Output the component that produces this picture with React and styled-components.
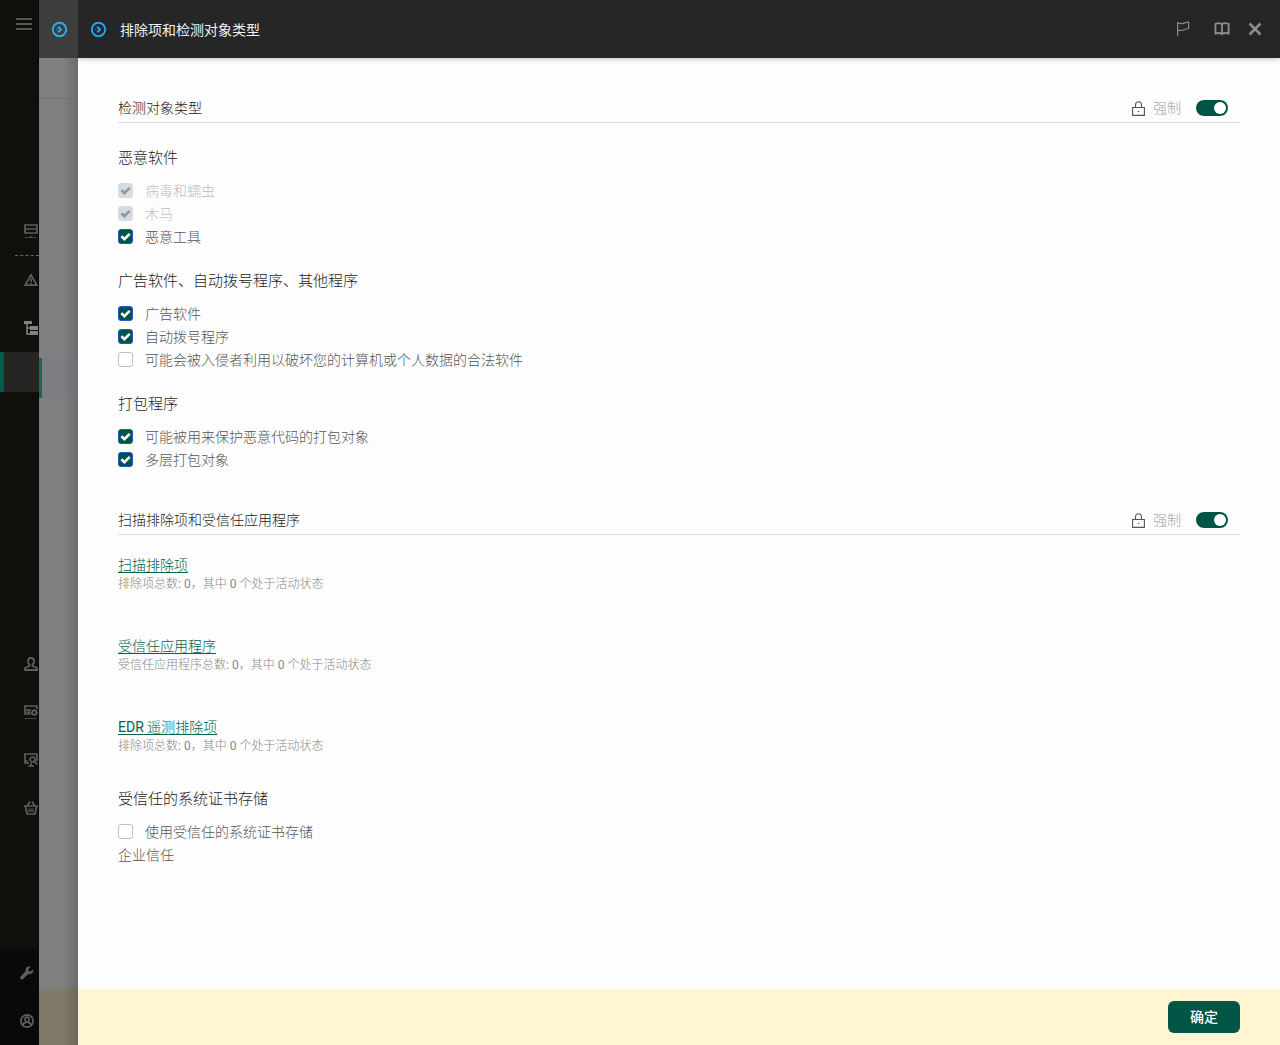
import React, { useState } from "react";
import styled, { createGlobalStyle } from "styled-components";

const GlobalStyle = createGlobalStyle`
  *, *::before, *::after { box-sizing: border-box; }
  body {
    margin: 0;
    background: #fdfdfd;
    color: #333;
    font-family: Roboto, "Noto Sans CJK SC", sans-serif;
    font-size: 14px;
    line-height: 20px;
    font-weight: 300;
  }
`;

const Shell = styled.div`
  display: grid;
  grid-template-columns: 39px 39px minmax(0, 1fr);
  min-height: 100vh;
`;

const Sidebar = styled.aside`
  display: flex;
  flex-direction: column;
  background: #0f0f0c;
  box-shadow: inset -1px 0 #060605;
`;

const iconButton = `
  display: flex;
  align-items: center;
  border: 0;
  background: none;
  color: inherit;
  cursor: pointer;
  font: inherit;
`;

const MenuButton = styled.button`
  ${iconButton}
  height: 48px;
  padding: 0 0 0 16px;
  color: #555553;
`;

const NavGroup = styled.nav`
  display: flex;
  flex-direction: column;
  margin-top: ${(p) => p.$top};
  background: ${(p) => p.$bg || "none"};
`;

const NavItem = styled.button`
  ${iconButton}
  height: 48px;
  padding: 0 0 0 ${(p) => (p.$inset ? "20px" : "24px")};
  color: ${(p) => (p.$bright ? "#838381" : "#5e5e5c")};
`;

const NavDivider = styled.hr`
  width: 24px;
  margin: 0 0 0 auto;
  border: 0;
  border-top: 1px dashed #6a6a68;
`;

const NavCurrent = styled.div`
  height: 40px;
  background: #252524;
  border-left: 4px solid #005c4b;
`;

const Underlay = styled.div`
  display: flex;
  flex-direction: column;
  background: linear-gradient(to right, transparent 24px, rgba(0, 0, 0, 0.16)), #808080;
`;

const UnderlayHeader = styled.div`
  display: flex;
  align-items: center;
  justify-content: center;
  height: 58px;
  padding-left: 2px;
  background: #3d3d3d;
  color: #2cabf2;
`;

const UnderlayTabs = styled.div`
  height: 41px;
  border-bottom: 1px solid #727272;
`;

const UnderlayCurrent = styled.div`
  height: 40px;
  margin-top: 259px;
  background: rgba(110, 118, 130, 0.25);
  border-left: 3px solid #1b6553;
`;

const UnderlayFooter = styled.div`
  height: 56px;
  margin-top: auto;
  background: linear-gradient(to right, transparent 24px, rgba(0, 0, 0, 0.16)), #807a68;
`;

const Drawer = styled.main`
  display: flex;
  flex-direction: column;
  background: #fdfdfd;
`;

const DrawerHeader = styled.header`
  display: flex;
  align-items: center;
  height: 58px;
  padding: 0 18px 0 12px;
  background: #262626;
  color: #8c8c8c;
  box-shadow: 0 1px 5px rgba(0, 0, 0, 0.25);
  clip-path: inset(0 0 -8px 0);
`;

const BackMark = styled.span`
  display: flex;
  width: 30px;
  color: #1ea5f3;
`;

const DrawerTitle = styled.h1`
  flex: 1;
  margin: 0;
  padding-top: 2px;
  color: #f2f2f2;
  font-size: 14px;
  font-weight: 400;
`;

const HeaderActions = styled.div`
  display: flex;
  align-items: center;
  gap: 18px;
`;

const HeaderButton = styled.button`
  ${iconButton}
  padding: 0 ${(p) => (p.$wide ? "6px" : "0")} 0 0;
`;

const Content = styled.div`
  flex: 1;
  padding: 40px;
`;

const Section = styled.section`
  & + & {
    margin-top: 39px;
  }
`;

const SectionHead = styled.div`
  display: flex;
  align-items: center;
  height: 25px;
  padding: 0 12px 4px 0;
  border-bottom: 1px solid #dedede;
`;

const SectionTitle = styled.h2`
  flex: 1;
  margin: 0;
  font-size: 14px;
  font-weight: 300;
  color: #222;
`;

const Enforce = styled.label`
  display: flex;
  align-items: center;
  gap: 8px;
  color: #a6a6a6;
`;

const Switch = styled.input`
  appearance: none;
  width: 32px;
  height: 16px;
  margin: 0 0 0 7px;
  padding: 2px;
  border-radius: 8px;
  background: ${(p) => (p.checked ? "#005546" : "#a6a6a6")};
  cursor: pointer;

  &::before {
    content: "";
    display: block;
    width: 12px;
    height: 12px;
    margin-left: ${(p) => (p.checked ? "16px" : "0")};
    border-radius: 50%;
    background: #fff;
  }
`;

const Group = styled.fieldset`
  min-width: 0;
  margin: ${(p) => p.$top} 0 0;
  padding: 0;
  border: 0;
`;

const GroupTitle = styled.legend`
  margin: 0 0 11px;
  padding: 0;
  color: #222;
  font-size: 15px;
`;

const OptionRow = styled.label`
  display: flex;
  align-items: center;
  gap: 12px;
  width: fit-content;
  height: 23px;
  color: ${(p) => (p.$disabled ? "#b9bfc5" : "#555")};
`;

const TickBox = styled.span`
  display: grid;
  width: 15px;
  height: 15px;

  & > * {
    grid-area: 1 / 1;
  }
  & > svg {
    pointer-events: none;
    color: ${(p) => (p.$disabled ? "#8c98a3" : "#fff")};
  }
`;

const TickInput = styled.input`
  appearance: none;
  width: 15px;
  height: 15px;
  margin: 0;
  border: 1px solid #b9c0c7;
  border-radius: 3px;
  background: #fff;

  &:checked {
    border-color: #2458c8;
    background: #005546;
  }
  &:disabled {
    border-color: #d5dbe0;
    background: #d5dbe0;
  }
`;

const LinkList = styled.div`
  display: flex;
  flex-direction: column;
  gap: 43px;
  margin-top: 20px;
`;

const LinkTitle = styled.a`
  display: block;
  width: fit-content;
  color: #006350;
  text-underline-offset: 2px;
`;

const LinkNote = styled.p`
  margin: 0;
  color: #888;
  font-size: 12px;
  line-height: 18px;
`;

const Latin = styled.span`
  font-weight: 400;
`;

const TrustNote = styled.p`
  margin: 2px 0 0;
  color: #555;
`;

const DrawerFooter = styled.footer`
  display: flex;
  align-items: center;
  justify-content: flex-end;
  height: 56px;
  padding: 0 40px;
  background: #fff5d0;
`;

const PrimaryButton = styled.button`
  width: 72px;
  height: 32px;
  padding: 0;
  border: 0;
  border-radius: 6px;
  background: #005546;
  color: #fff;
  font: inherit;
  font-weight: 500;
  cursor: pointer;
`;

const Icon = ({ w = 14, h = w, sw = 1.5, box, children }) => (
  <svg width={w} height={h} viewBox={box || `0 0 ${w} ${h}`} fill="none" stroke="currentColor" strokeWidth={sw} aria-hidden="true">
    {children}
  </svg>
);

const ArrowCircle = () => (
  <Icon w={17} sw={2}>
    <circle cx="8.5" cy="8.5" r="6.7" />
    <path d="M7.2 5.8 10 8.5 7.2 11.2" />
    <path d="M5.8 7.2v2.6" strokeWidth="1" opacity=".5" />
  </Icon>
);

const ServerIcon = () => (
  <Icon>
    <path d="M1 1h12v8H1zM1 5h12" strokeWidth="1.700" />
    <path d="M1 13.500h12" strokeWidth="1" strokeDasharray="2 1" />
    <path d="M6 13h2" />
  </Icon>
);

const WarningIcon = () => (
  <Icon sw={1.700}>
    <path d="M7 2 1.200 12.200h11.600zM7 5.500v3.300M7 9.800v1.200" />
  </Icon>
);

const TreeIcon = () => (
  <Icon>
    <path d="M0 0h8v3H0zM6 5h8v4H6zM6 10h8v4H6z" fill="currentColor" stroke="none" />
    <path d="M3 3v10h3M3 7h3" />
  </Icon>
);

const UserIcon = () => (
  <Icon sw={1.800}>
    <path d="M7 1C5 1 4 2.300 4 4.100c0 1.600.6 2.900 1.500 3.600V9L1 11v2h12v-2L8.500 9V7.700C9.400 7 10 5.700 10 4.100 10 2.300 9 1 7 1z" />
  </Icon>
);

const ServerGearIcon = () => (
  <Icon sw={1.700}>
    <path d="M13 4V1H1v8h6M1 5h6M3 7.200h3" />
    <circle cx="10.300" cy="7.500" r="2.200" />
    <path d="M10.300 4v1.500M10.300 9.500V11M6.900 7.500h1.300M12.400 7.500H14M7.900 5.100l1 1M11.700 8.900l1 1M12.700 5.100l-1 1M8.900 8.900l-1 1" strokeWidth="1" />
    <path d="M1 13.500h12" strokeWidth="1" strokeDasharray="2 1" />
  </Icon>
);

const MonitorIcon = () => (
  <Icon sw={1.700}>
    <path d="M5 10H1V1h12v7M1 8h3M7 10v3M4 13h6" />
    <circle cx="8.500" cy="6.500" r="2.500" />
    <path d="m10.300 8.300 3.200 3.200" />
  </Icon>
);

const BasketIcon = () => (
  <Icon sw={1.700}>
    <path d="M0 5h14M1.500 5.500 3 13h8l1.500-7.500M3.500 4.500 6 .5M10.500 4.500 8 .5" />
    <path d="M5 7.500V11M7 7.500V11M9 7.500V11" strokeWidth="1.200" />
  </Icon>
);

const WrenchIcon = () => (
  <Icon>
    <path d="M13.100 3.200 10.800 5.500 8.700 5.200 8.400 3.200 10.700.8C8.900.1 7 .6 6.100 2c-.7 1-.7 2.100-.4 3.100L.7 10.400c-.8.8-.8 1.800-.1 2.500s1.800.7 2.500 0l5.200-5c1.300.5 3 .2 4-.8 1-1 1.300-2.500.8-3.900z" fill="currentColor" stroke="none" />
  </Icon>
);

const AccountIcon = () => (
  <Icon sw={1.700}>
    <circle cx="7" cy="7" r="6.100" />
    <path d="M7 3.200c-1.300 0-2 .9-2 2.100 0 1 .4 1.800 1 2.300v.8l-2.700 1.200v1.700M7 3.200c1.300 0 2 .9 2 2.100 0 1-.4 1.800-1 2.300v.8l2.700 1.200v1.700" />
  </Icon>
);

const FlagIcon = () => (
  <Icon w={14} h={16} sw={1.2}>
    <path d="M1.600 1v14M1.600 2.300c2-.9 3.600.9 6 .1 2-.7 3.200-1.400 5-1.400v6.500c-2 0-3.200.8-5 1.500-2.400.9-4-.3-6 .8" />
  </Icon>
);

const BookIcon = () => (
  <Icon w={16} h={14} sw={1.8}>
    <path d="M8 2.200C6.500 1 3.500 1 1.400 1.900v9.700c2.100-.7 5.100-.7 6.600.5 1.500-1.200 4.500-1.200 6.600-.5V1.900C12.500 1 9.500 1 8 2.200zv10" />
  </Icon>
);

const CloseIcon = () => (
  <Icon w={14} sw={2.6}>
    <path d="m1.500 1.500 11 11M12.500 1.500l-11 11" />
  </Icon>
);

const LockIcon = () => (
  <Icon w={13} h={15} sw={1.1}>
    <path d="M.6 6.500h11.800v7.900H.6zM3.500 6.500V4c0-2 1.200-3.300 3-3.300s3 1.300 3 3.300v2.500" stroke="#555" />
    <path d="M5.800 10.500h1.400" stroke="#555" />
  </Icon>
);

function Option({ label, checked, disabled }) {
  const [on, setOn] = useState(!!checked);
  return (
    <OptionRow $disabled={disabled}>
      <TickBox $disabled={disabled}>
        <TickInput type="checkbox" checked={on} disabled={disabled} onChange={() => setOn(!on)} />
        {on && (
          <Icon w={15} sw={2.6}>
            <path d="m3.400 7.300 3 2.900 5.300-5.300" />
          </Icon>
        )}
      </TickBox>
      {label}
    </OptionRow>
  );
}

function OptionGroup({ title, options, top = "23px" }) {
  return (
    <Group $top={top}>
      <GroupTitle>{title}</GroupTitle>
      {options.map((o) => (
        <Option key={o.label} {...o} />
      ))}
    </Group>
  );
}

function Heading({ children }) {
  const [on, setOn] = useState(true);
  return (
    <SectionHead>
      <SectionTitle>{children}</SectionTitle>
      <Enforce>
        <LockIcon />
        强制
        <Switch type="checkbox" role="switch" checked={on} onChange={() => setOn(!on)} />
      </Enforce>
    </SectionHead>
  );
}

const malware = [
  { label: "病毒和蠕虫", checked: true, disabled: true },
  { label: "木马", checked: true, disabled: true },
  { label: "恶意工具", checked: true },
];

const adware = [
  { label: "广告软件", checked: true },
  { label: "自动拨号程序", checked: true },
  { label: "可能会被入侵者利用以破坏您的计算机或个人数据的合法软件" },
];

const packers = [
  { label: "可能被用来保护恶意代码的打包对象", checked: true },
  { label: "多层打包对象", checked: true },
];

const links = [
  { title: "扫描排除项", noun: "排除项", total: 0, active: 0 },
  { title: "受信任应用程序", noun: "受信任应用程序", total: 0, active: 0 },
  { prefix: "EDR", title: " 遥测排除项", noun: "排除项", total: 0, active: 0 },
];

export default function App() {
  return (
    <>
      <GlobalStyle />
      <Shell>
        <Sidebar>
          <MenuButton aria-label="菜单">
            <Icon w={16} h={12} sw={2}>
              <path d="M0 1h16M0 6h16M0 11h16" />
            </Icon>
          </MenuButton>
          <NavGroup $top="159px">
            <NavItem aria-label="服务器"><ServerIcon /></NavItem>
            <NavDivider />
            <NavItem aria-label="监控"><WarningIcon /></NavItem>
            <NavItem aria-label="资产" $bright><TreeIcon /></NavItem>
            <NavCurrent />
          </NavGroup>
          <NavGroup $top="248px">
            <NavItem aria-label="用户"><UserIcon /></NavItem>
            <NavItem aria-label="操作"><ServerGearIcon /></NavItem>
            <NavItem aria-label="发现"><MonitorIcon /></NavItem>
            <NavItem aria-label="市场"><BasketIcon /></NavItem>
          </NavGroup>
          <NavGroup $top="auto" $bg="#090909">
            <NavItem aria-label="设置" $inset><WrenchIcon /></NavItem>
            <NavItem aria-label="账户" $inset><AccountIcon /></NavItem>
          </NavGroup>
        </Sidebar>

        <Underlay>
          <UnderlayHeader><ArrowCircle /></UnderlayHeader>
          <UnderlayTabs />
          <UnderlayCurrent />
          <UnderlayFooter />
        </Underlay>

        <Drawer>
          <DrawerHeader>
            <BackMark><ArrowCircle /></BackMark>
            <DrawerTitle>排除项和检测对象类型</DrawerTitle>
            <HeaderActions>
              <HeaderButton aria-label="标记" $wide><FlagIcon /></HeaderButton>
              <HeaderButton aria-label="帮助"><BookIcon /></HeaderButton>
              <HeaderButton aria-label="关闭"><CloseIcon /></HeaderButton>
            </HeaderActions>
          </DrawerHeader>

          <Content>
            <Section>
              <Heading>检测对象类型</Heading>
              <OptionGroup title="恶意软件" options={malware} top="25px" />
              <OptionGroup title="广告软件、自动拨号程序、其他程序" options={adware} />
              <OptionGroup title="打包程序" options={packers} />
            </Section>
            <Section>
              <Heading>扫描排除项和受信任应用程序</Heading>
              <LinkList>
                {links.map((l) => (
                  <div key={l.title}>
                    <LinkTitle href="#">
                      {l.prefix && <Latin>{l.prefix}</Latin>}
                      {l.title}
                    </LinkTitle>
                    <LinkNote>
                      {l.noun}总数<Latin>: {l.total}</Latin>，其中<Latin> {l.active} </Latin>个处于活动状态
                    </LinkNote>
                  </div>
                ))}
              </LinkList>
              <OptionGroup title="受信任的系统证书存储" options={[{ label: "使用受信任的系统证书存储" }]} top="34px" />
              <TrustNote>企业信任</TrustNote>
            </Section>
          </Content>

          <DrawerFooter>
            <PrimaryButton>确定</PrimaryButton>
          </DrawerFooter>
        </Drawer>
      </Shell>
    </>
  );
}
